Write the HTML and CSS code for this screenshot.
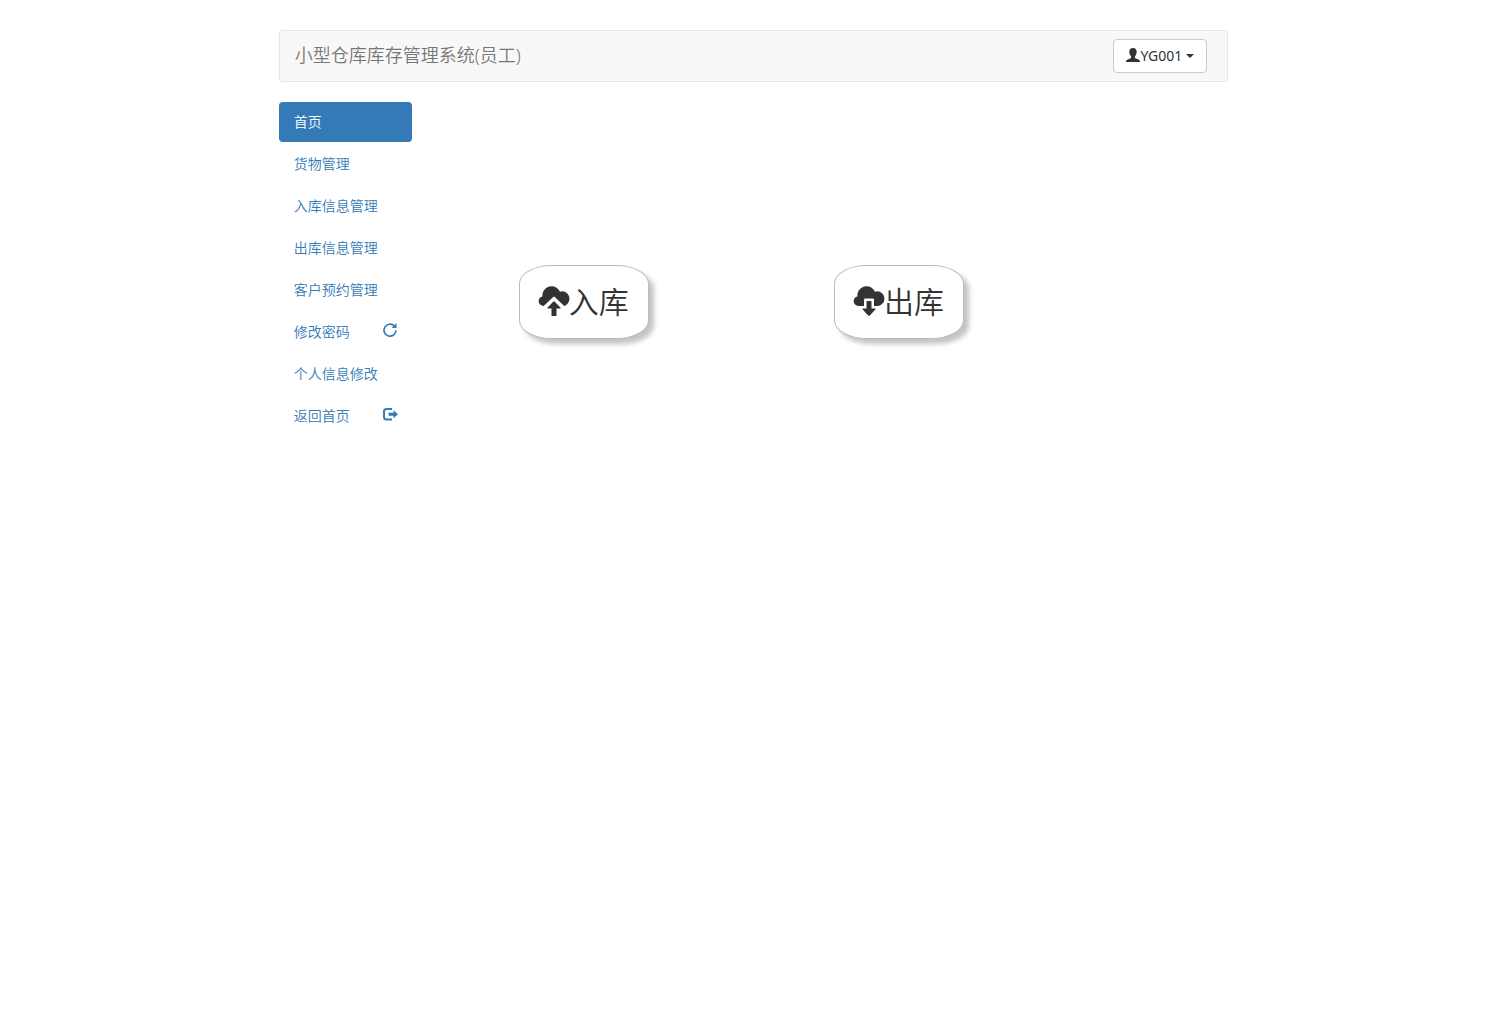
FILE: index.html
```html
<!DOCTYPE html>
<html lang="zh-CN">
<head>
<meta charset="utf-8">
<meta name="viewport" content="width=device-width, initial-scale=1">
<title>小型仓库库存管理系统</title>
<link rel="stylesheet" href="styles.css">
</head>
<body>
<div class="container">
  <header class="navbar">
    <span class="brand">小型仓库库存管理系统(员工)</span>
    <button type="button" class="user-menu" aria-haspopup="true">
      <svg class="icon" viewBox="0 0 14 14" aria-hidden="true"><path d="M7 -1C9.300 -1 10.800 .5 10.700 2.900C10.600 4.800 9.900 6.300 8.900 7.400V8.500C8.900 9 9.300 9.200 9.800 9.400L12.500 10.500C13.600 11 14 11.500 14 13H0C0 11.500 .4 11 1.500 10.500L4.200 9.400C4.700 9.200 5.100 9 5.100 8.500V7.400C4.100 6.300 3.400 4.800 3.300 2.900C3.200 .5 4.700 -1 7 -1Z"/></svg><span>YG001</span><span class="caret"></span>
    </button>
  </header>
  <div class="layout">
    <nav class="sidebar">
      <a class="nav-link active" href="#" aria-current="page">首页</a>
      <a class="nav-link" href="#">货物管理</a>
      <a class="nav-link" href="#">入库信息管理</a>
      <a class="nav-link" href="#">出库信息管理</a>
      <a class="nav-link" href="#">客户预约管理</a>
      <a class="nav-link" href="#">修改密码
        <svg class="icon" viewBox="0 0 14 14" aria-hidden="true"><path d="M11.300 3A6 6 0 1 0 13 7.300" fill="none" stroke="currentColor" stroke-width="1.700"/><path d="M13.500 0V5H8.500Z"/></svg>
      </a>
      <a class="nav-link" href="#">个人信息修改</a>
      <a class="nav-link" href="#">返回首页
        <svg class="icon" viewBox="0 0 14 14" aria-hidden="true"><path d="M9 2H3.500Q1 2 1 4.500V10Q1 12.500 3.500 12.500H9" fill="none" stroke="currentColor" stroke-width="2"/><path d="M10.500 3.300L15 7.300L10.500 11.300V8.800H5.500V5.800H10.500Z"/></svg>
      </a>
    </nav>
    <main class="actions">
      <div>
        <button type="button" class="action">
          <svg class="icon-large" viewBox="0 0 1200 1200" aria-hidden="true"><path transform="translate(0 1060) scale(1 -1)" d="M502 1089q110 0 201 -59.500t135 -156.500q43 15 89 15q121 0 206 -86.500t86 -206.500q0 -99 -60 -181t-150 -110l-378 360q-13 16 -31.500 16t-31.500 -16l-381 -365h-9q-79 0 -135.500 57.500t-56.500 136.500q0 69 43 122.500t108 67.500q-2 19 -2 38q0 100 49 184.500t133.500 134t184.500 49.500zM632 467l223 -228q13 -16 8 -27.500t-26 -11.500h-137v-275q0 -10 -7.500 -17.500t-17.500 -7.500h-150q-10 0 -17.500 7.500t-7.500 17.500v275h-137q-21 0 -26 11.500t8 27.500q199 204 223 228q19 19 31.500 19t32.500 -19z"/></svg><span>入库</span>
        </button>
      </div>
      <div>
        <button type="button" class="action">
          <svg class="icon-large" viewBox="0 0 1200 1200" aria-hidden="true"><path transform="translate(0 1060) scale(1 -1)" d="M503 1089q110 0 200.500 -59.500t134.500 -156.500q44 14 90 14q120 0 205 -86.500t85 -206.500t-85 -207t-205 -87h-128v250q0 21 -14.500 35.500t-35.500 14.500h-300q-21 0 -35.500 -14.500t-14.500 -35.500v-250h-222q-80 0 -136 57.500t-56 136.500q0 69 43 122.500t108 67.500q-2 19 -2 37q0 100 49 185t134 134t185 49zM525 500h150q10 0 17.500 -7.500t7.500 -17.500v-275h137q21 0 26 -11.500t-8 -27.500l-223 -244q-13 -16 -32 -16t-32 16l-223 244q-13 16 -8 27.500t26 11.500h137v275q0 10 7.500 17.500t17.500 7.500z"/></svg><span>出库</span>
        </button>
      </div>
    </main>
  </div>
</div>
</body>
</html>
```
FILE: styles.css
```css
* {
  box-sizing: border-box;
}

body {
  margin: 0;
  background: #fff;
  color: #333;
  font-family: "Noto Sans", "Noto Sans CJK SC", sans-serif;
  font-size: 14px;
  font-weight: 350;
  line-height: 20px;
}

button {
  font: inherit;
  color: inherit;
  cursor: pointer;
}

.container {
  width: 65%;
  margin: 0 auto;
  padding: 30px 15px;
}

.navbar {
  display: flex;
  align-items: center;
  justify-content: space-between;
  min-height: 52px;
  padding: 0 20px 0 15px;
  border: 1px solid #e7e7e7;
  border-radius: 4px;
  background: #f8f8f8;
}

.brand {
  padding-bottom: 2px;
  color: #777;
  font-size: 18px;
}

.user-menu {
  display: flex;
  align-items: center;
  padding: 6px 12px;
  border: 1px solid #ccc;
  border-radius: 4px;
  background: #fff;
  font-weight: 400;
}

.icon {
  width: 14px;
  height: 14px;
  fill: currentColor;
  overflow: visible;
}

.nav-link .icon {
  margin-top: 1px;
}

.caret {
  margin-left: 4px;
  border: 4px solid transparent;
  border-top-color: currentColor;
  border-bottom: 0;
}

.layout {
  display: grid;
  grid-template-columns: 14% 1fr;
  column-gap: 30px;
  margin-top: 20px;
}

.sidebar {
  display: flex;
  flex-direction: column;
  gap: 2px;
}

.nav-link {
  display: flex;
  justify-content: space-between;
  padding: 10px 15px;
  border-radius: 4px;
  color: #337ab7;
  text-decoration: none;
  white-space: nowrap;
}

.nav-link.active {
  background: #337ab7;
  color: #fff;
}

.actions {
  display: grid;
  grid-template-columns: 4fr 5fr;
  align-items: start;
  padding: 163px 0 0 77px;
}

.action {
  display: flex;
  align-items: center;
  padding: 15px 19px;
  border: 1px solid #bbb;
  border-radius: 25%;
  background: #fff;
  box-shadow: 5px 5px 5px #c3c3c8;
  font-size: 30px;
  line-height: 42px;
}

.icon-large {
  width: 30px;
  height: 30px;
  fill: currentColor;
  overflow: visible;
}
```
